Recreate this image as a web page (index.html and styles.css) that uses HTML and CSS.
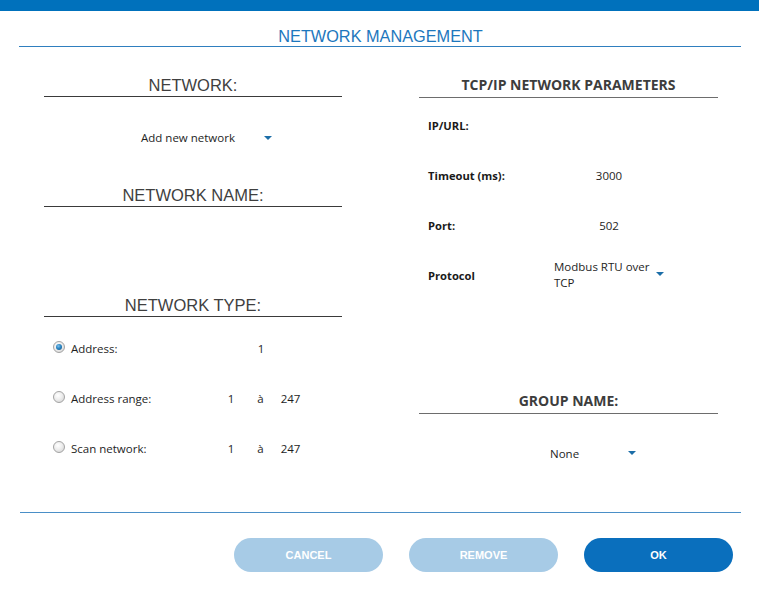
FILE: index.html
```html
<!DOCTYPE html>
<html>
<head>
<meta charset="utf-8">
<link rel="stylesheet" href="styles.css">
</head>
<body>
<div class="topbar"></div>
<div class="header"><h1 class="title">NETWORK MANAGEMENT</h1></div>
<main class="main">
  <section class="col col-left">
    <h2 class="sec-title first">NETWORK:</h2>
    <div class="dropdown net-dd"><span class="dd-text">Add new network</span><span class="caret caret-net"></span></div>
    <h2 class="sec-title name-title">NETWORK NAME:</h2>
    <h2 class="sec-title type-title">NETWORK TYPE:</h2>
    <div class="radios">
      <div class="radio-row">
        <span class="radio checked"></span><span class="radio-label">Address:</span>
        <span class="val span3">1</span>
      </div>
      <div class="radio-row">
        <span class="radio"></span><span class="radio-label">Address range:</span>
        <span class="val">1</span><span class="val">à</span><span class="val">247</span>
      </div>
      <div class="radio-row">
        <span class="radio"></span><span class="radio-label">Scan network:</span>
        <span class="val">1</span><span class="val">à</span><span class="val">247</span>
      </div>
    </div>
  </section>
  <section class="col col-right">
    <h3 class="sub-title tcp-title">TCP/IP NETWORK PARAMETERS</h3>
    <div class="params">
      <div class="param-row"><span class="param-label">IP/URL:</span><span class="param-val"></span></div>
      <div class="param-row"><span class="param-label">Timeout (ms):</span><span class="param-val">3000</span></div>
      <div class="param-row"><span class="param-label">Port:</span><span class="param-val">502</span></div>
      <div class="param-row"><span class="param-label">Protocol</span>
        <span class="proto"><span class="proto-text">Modbus RTU over TCP</span><span class="caret caret-proto"></span></span>
      </div>
    </div>
    <h3 class="sub-title group-title">GROUP NAME:</h3>
    <div class="dropdown group-dd"><span class="dd-text">None</span><span class="caret caret-group"></span></div>
  </section>
</main>
<div class="rule"></div>
<footer class="footer">
  <button class="btn btn-light">CANCEL</button>
  <button class="btn btn-light">REMOVE</button>
  <button class="btn btn-primary">OK</button>
</footer>
</body>
</html>
```
FILE: styles.css
```css
* { box-sizing: border-box; }
html, body { margin: 0; padding: 0; background: #fff; }
body {
  width: 759px;
  height: 593px;
  overflow: hidden;
  font-family: "Open Sans", "Liberation Sans", sans-serif;
  font-size: 11.5px;
  color: #1e1e1e;
}
.topbar { height: 11px; background: #0071bc; }
.header {
  margin: 16px 18px 0 19px;
  padding-bottom: 1px;
  border-bottom: 1px solid #2f7fbf;
}
.title {
  margin: 0;
  font-family: "Liberation Sans", Arial, sans-serif;
  font-weight: normal;
  font-size: 16.3px;
  line-height: 18px;
  text-align: center;
  color: #1d77bd;
  padding-left: 1px;
}
.main {
  display: grid;
  grid-template-columns: 298px 299px;
  column-gap: 77px;
  padding-left: 44px;
  margin-bottom: 39px;
  align-items: start;
}
.col { display: flex; flex-direction: column; }
.sec-title {
  margin: 0;
  font-family: "Liberation Sans", Arial, sans-serif;
  font-weight: normal;
  font-size: 16.5px;
  line-height: 19px;
  text-align: center;
  color: #3f3f3f;
  padding-bottom: 1px;
  border-bottom: 1px solid #3a3a3a;
}
.sec-title.first { margin-top: 29px; }
.name-title { margin-top: 40px; }
.type-title { margin-top: 89px; }
.dropdown {
  display: flex;
  align-items: center;
  height: 16px;
  line-height: 16px;
}
.net-dd { margin-top: 33px; padding-left: 97px; }
.net-dd .dd-text { width: 123px; }
.caret {
  width: 0; height: 0;
  border-left: 4px solid transparent;
  border-right: 4px solid transparent;
  border-top: 4px solid #1c6ea8;
}
.caret-net { margin-top: -1px; }
.radios { margin-top: 6px; display: flex; flex-direction: column; }
.radio-row {
  height: 50px;
  display: grid;
  grid-template-columns: 12px 156px 20px 39px 21px;
  align-items: center;
  padding-left: 9px;
}
.radio {
  width: 12px; height: 12px;
  border-radius: 50%;
  border: 1px solid #a3a3a3;
  background: radial-gradient(circle at 40% 35%, #ffffff 0%, #f0f0f0 40%, #cfcfcf 100%);
  margin-top: -2px;
  position: relative;
}
.radio.checked::after {
  content: "";
  position: absolute;
  left: 2px; top: 2px;
  width: 6px; height: 6px;
  border-radius: 50%;
  background: radial-gradient(circle at 40% 35%, #7fc0ea 0%, #2a86c4 45%, #16507c 100%);
}
.radio-label { padding-left: 6px; }
.val { text-align: center; }
.span3 { grid-column: 3 / span 3; }
.sub-title {
  margin: 0;
  font-family: "Open Sans", "Liberation Sans", sans-serif;
  font-weight: bold;
  font-size: 14px;
  line-height: 20px;
  text-align: center;
  color: #3d3d3d;
  padding-bottom: 2px;
  border-bottom: 1px solid #6d6d6d;
}
.tcp-title { margin-top: 28px; }
.group-title { margin-top: 91px; }
.params { margin-top: 2px; display: flex; flex-direction: column; }
.param-row {
  height: 50px;
  display: grid;
  grid-template-columns: 126px 110px;
  align-items: center;
  padding-left: 9px;
}
.param-label { font-weight: bold; color: #1a1a1a; font-size: 11.2px; }
.param-val { text-align: center; }
.proto { display: flex; align-items: center; }
.proto-text { width: 98px; line-height: 16px; }
.caret-proto { margin-left: 5px; margin-top: -3px; }
.group-dd { margin-top: 32px; padding-left: 131px; }
.group-dd .dd-text { width: 78px; }
.caret-group { margin-top: -2px; }
.rule {
  height: 1px;
  margin: 0 18px 0 20px;
  background: #4a8fc7;
}
.footer {
  display: flex;
  justify-content: flex-end;
  gap: 26px;
  padding-right: 26px;
  margin-top: 25px;
}
.btn {
  width: 149px;
  height: 34px;
  border: none;
  border-radius: 17px;
  font-family: "Liberation Sans", Arial, sans-serif;
  font-weight: bold;
  font-size: 11px;
  color: #fff;
  padding: 0;
}
.btn-light { background: #a7cbe6; }
.btn-primary { background: #0a6fbd; }
```
